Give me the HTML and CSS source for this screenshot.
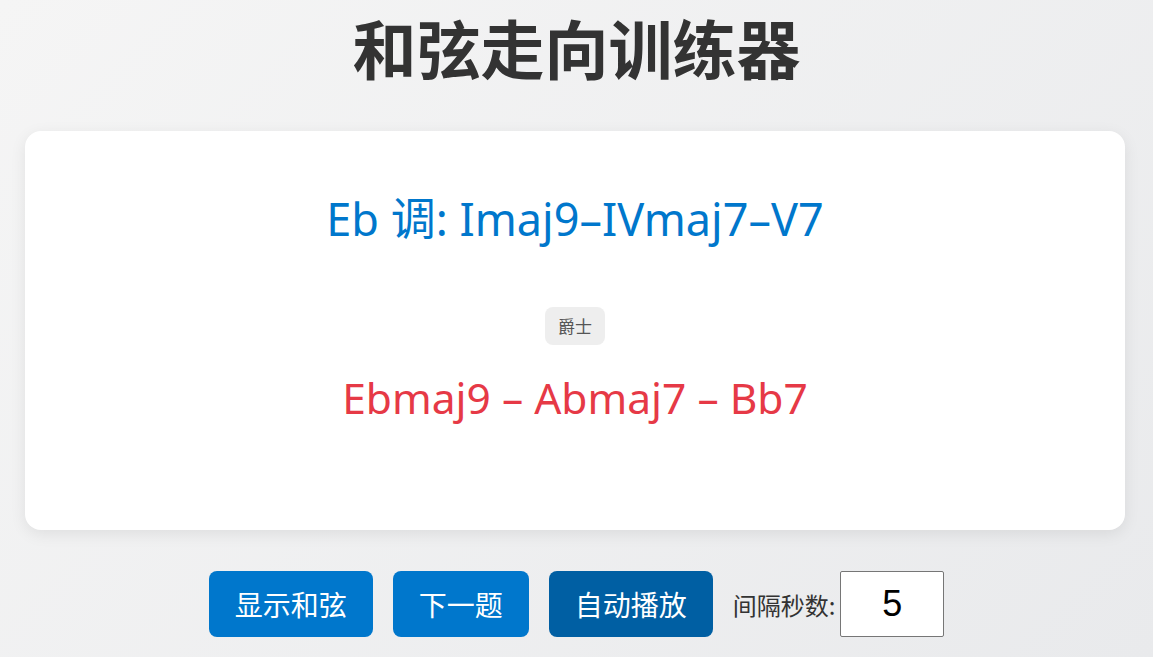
FILE: index.html
```html
<!DOCTYPE html>
<html lang="zh-CN">
<head>
<meta charset="utf-8">
<title>和弦走向训练器</title>
<link rel="stylesheet" href="styles.css">
</head>
<body>
  <h1 class="title">和弦走向训练器</h1>
  <main class="card">
    <div class="progression">Eb 调: Imaj9–IVmaj7–V7</div>
    <span class="badge">爵士</span>
    <div class="chords">Ebmaj9 – Abmaj7 – Bb7</div>
  </main>
  <div class="controls">
    <button class="btn">显示和弦</button>
    <button class="btn">下一题</button>
    <button class="btn btn-dark">自动播放</button>
    <label class="interval-label" for="interval">间隔秒数:</label>
    <input class="interval-input" id="interval" type="number" value="5">
  </div>
</body>
</html>
```

FILE: styles.css
```css
html, body {
  margin: 0;
  padding: 0;
}
body {
  min-height: 657px;
  background: linear-gradient(135deg, #f5f5f5 0%, #e9eaec 100%);
  font-family: "Noto Sans", "Noto Sans CJK SC", sans-serif;
  color: #333;
}
.title {
  margin: -4px 0 0;
  text-align: center;
  font-family: "Noto Sans CJK SC", sans-serif;
  font-weight: 700;
  font-size: 64px;
  line-height: 100px;
  color: #333;
}
.card {
  width: 1100px;
  box-sizing: border-box;
  margin: 35px 0 0 25px;
  background: #fff;
  border-radius: 16px;
  box-shadow: 0 4px 16px rgba(0, 0, 0, 0.08);
  padding: 60px 40px 104px;
  display: flex;
  flex-direction: column;
  align-items: center;
}
.progression {
  font-size: 45px;
  line-height: 56px;
  color: #0077cc;
}
.badge {
  margin-top: 60px;
  height: 38px;
  line-height: 38px;
  padding: 0 13px;
  background: #eeeeee;
  border-radius: 8px;
  font-family: "Noto Sans CJK SC", sans-serif;
  font-size: 17px;
  color: #555;
}
.chords {
  margin-top: 25px;
  font-size: 42.5px;
  line-height: 56px;
  color: #e63946;
}
.controls {
  margin-top: 41px;
  display: flex;
  justify-content: center;
  align-items: center;
  gap: 20px;
}
.btn {
  height: 66px;
  padding: 0 26px;
  border: none;
  border-radius: 8px;
  background: #0077cc;
  color: #fff;
  font-family: "Noto Sans CJK SC", sans-serif;
  font-size: 28px;
  cursor: pointer;
}
.btn-dark {
  background: #005fa3;
}
.interval-label {
  font-family: "Noto Sans CJK SC", sans-serif;
  font-size: 24px;
  color: #333;
  margin-right: -15px;
}
.interval-input {
  width: 104px;
  height: 66px;
  box-sizing: border-box;
  border: 1px solid #767676;
  border-radius: 2px;
  background: #fff;
  font-family: "Liberation Sans", sans-serif;
  font-size: 36px;
  text-align: center;
  color: #000;
  -moz-appearance: textfield;
}
.interval-input::-webkit-outer-spin-button,
.interval-input::-webkit-inner-spin-button {
  -webkit-appearance: none;
  margin: 0;
}
```
